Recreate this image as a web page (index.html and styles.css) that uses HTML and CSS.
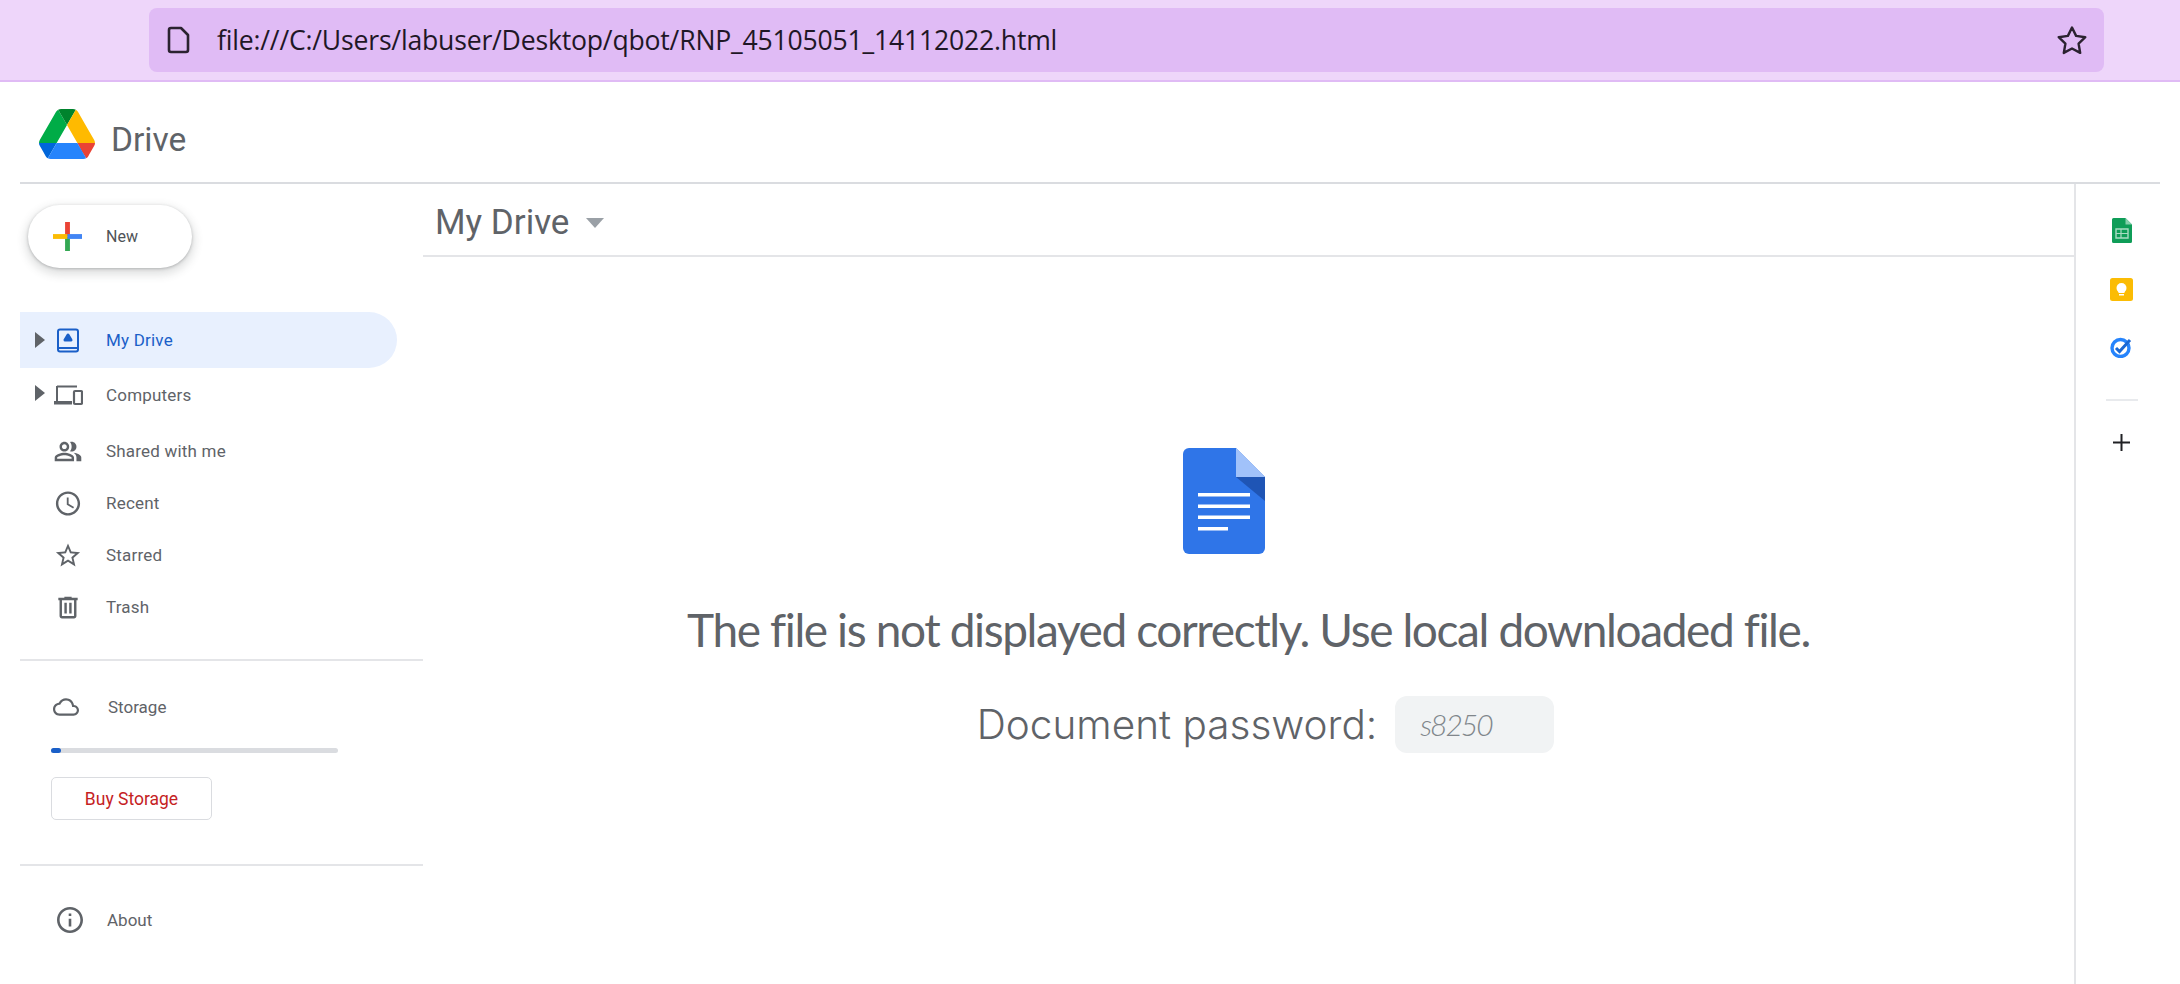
FILE: index.html
```html
<!DOCTYPE html>
<html lang="en">
<head>
    <meta charset="UTF-8">
    <title>Drive</title>
    <link rel="stylesheet" href="styles.css">
</head>
<body>
    <div class="browser-bar">
        <div class="address">
            <svg class="file-icon" viewBox="0 0 24 28"><path d="M4 2h10l7 7v15a2 2 0 0 1-2 2H4a2 2 0 0 1-2-2V4a2 2 0 0 1 2-2z" fill="none" stroke="#2b2230" stroke-width="2.6" stroke-linejoin="round"/></svg>
            <span class="url">file:///C:/Users/labuser/Desktop/qbot/RNP_45105051_14112022.html</span>
            <svg class="bookmark" viewBox="0 0 32 31"><path d="M16 2.5l4.1 8.4 9.2 1.3-6.7 6.5 1.6 9.2-8.2-4.4-8.2 4.4 1.6-9.2-6.7-6.5 9.2-1.3z" fill="none" stroke="#2b2230" stroke-width="2.4" stroke-linejoin="round"/></svg>
        </div>
    </div>

    <div class="app">
        <header class="app-header">
            <svg class="drive-logo" viewBox="0 0 87.3 78">
                <path d="m6.6 66.85 3.85 6.65c.8 1.4 1.95 2.5 3.3 3.3l13.75-23.8h-27.5c0 1.55.4 3.1 1.2 4.5z" fill="#0066da"/>
                <path d="m43.65 25-13.75-23.8c-1.35.8-2.5 1.9-3.3 3.3l-25.4 44a9.06 9.06 0 0 0 -1.2 4.5h27.5z" fill="#00ac47"/>
                <path d="m73.55 76.8c1.35-.8 2.5-1.9 3.3-3.3l1.6-2.75 7.65-13.25c.8-1.4 1.2-2.95 1.2-4.5h-27.502l5.852 11.5z" fill="#ea4335"/>
                <path d="m43.65 25 13.75-23.8c-1.35-.8-2.9-1.2-4.5-1.2h-18.5c-1.6 0-3.15.45-4.5 1.2z" fill="#00832d"/>
                <path d="m59.8 53h-32.3l-13.75 23.8c1.35.8 2.9 1.2 4.5 1.2h50.8c1.6 0 3.15-.45 4.5-1.2z" fill="#2684fc"/>
                <path d="m73.4 26.5-12.7-22c-.8-1.4-1.95-2.5-3.3-3.3l-13.75 23.8 16.15 28h27.45c0-1.55-.4-3.1-1.2-4.5z" fill="#ffba00"/>
            </svg>
            <span class="drive-name">Drive</span>
        </header>

        <div class="app-body">
            <aside class="sidebar">
                <button class="new-btn">
                    <svg class="new-plus" viewBox="0 0 30 30">
                        <rect x="12.5" y="0" width="5" height="15" fill="#ea4335"/>
                        <rect x="12.5" y="15" width="5" height="15" fill="#34a853"/>
                        <rect x="0" y="12.5" width="15" height="5" fill="#fbbc04"/>
                        <rect x="15" y="12.5" width="15" height="5" fill="#4285f4"/>
                    </svg>
                    <span>New</span>
                </button>

                <nav class="nav">
                    <div class="nav-item active">
                        <span class="arrow"></span>
                        <svg class="nav-icon" viewBox="0 0 30 29"><rect x="5" y="3.5" width="20" height="22" rx="2" fill="none" stroke="#1a5fc8" stroke-width="2"/><rect x="5" y="21" width="20" height="2" fill="#1a5fc8"/><path d="M15 9l3 5h-6z" fill="#1a5fc8" stroke="#1a5fc8" stroke-width="3" stroke-linejoin="round"/></svg>
                        <span>My Drive</span>
                    </div>
                    <div class="nav-item computers">
                        <span class="arrow"></span>
                        <svg class="nav-icon" viewBox="0 0 30 29"><path d="M4 5.500h20M4 5v15" fill="none" stroke="#5f6368" stroke-width="2"/><path d="M1 20h18v3.500H1z" fill="#5f6368"/><rect x="21" y="10" width="8" height="13" rx="1" fill="none" stroke="#5f6368" stroke-width="2.200"/></svg>
                        <span>Computers</span>
                    </div>
                    <div class="nav-item shared">
                        <span class="arrow-space"></span>
                        <svg class="nav-icon" viewBox="0 0 24 24"><path fill="#5f6368" d="M16.67 13.13C18.04 14.06 19 15.32 19 17v3h4v-3c0-2.18-3.57-3.47-6.33-3.87zM15 12c2.21 0 4-1.79 4-4s-1.79-4-4-4c-.47 0-.91.1-1.33.24C14.5 5.27 15 6.58 15 8s-.5 2.73-1.33 3.76c.42.14.86.24 1.33.24zM9 12c2.21 0 4-1.79 4-4s-1.79-4-4-4-4 1.79-4 4 1.79 4 4 4zm0-6c1.1 0 2 .9 2 2s-.9 2-2 2-2-.9-2-2 .9-2 2-2zM9 13c-2.67 0-8 1.34-8 4v3h16v-3c0-2.66-5.33-4-8-4zm6 5H3v-.99C3.2 16.29 6.3 15 9 15s5.8 1.29 6 2v1z"/></svg>
                        <span>Shared with me</span>
                    </div>
                    <div class="nav-item">
                        <span class="arrow-space"></span>
                        <svg class="nav-icon" viewBox="0 0 24 24"><path fill="#5f6368" d="M11.99 2C6.47 2 2 6.48 2 12s4.47 10 9.99 10C17.52 22 22 17.52 22 12S17.52 2 11.99 2zM12 20c-4.42 0-8-3.58-8-8s3.58-8 8-8 8 3.58 8 8-3.58 8-8 8zM12.5 7H11v6l5.25 3.15.75-1.23-4.5-2.67z"/></svg>
                        <span>Recent</span>
                    </div>
                    <div class="nav-item">
                        <span class="arrow-space"></span>
                        <svg class="nav-icon" viewBox="0 0 24 24"><path fill="#5f6368" d="M22 9.24l-7.19-.62L12 2 9.19 8.63 2 9.24l5.46 4.73L5.82 21 12 17.27 18.18 21l-1.63-7.03L22 9.24zM12 15.4l-3.76 2.27 1-4.28-3.32-2.88 4.38-.38L12 6.1l1.71 4.04 4.38.38-3.32 2.88 1 4.28L12 15.4z"/></svg>
                        <span>Starred</span>
                    </div>
                    <div class="nav-item">
                        <span class="arrow-space"></span>
                        <svg class="nav-icon" viewBox="0 0 24 24"><path fill="#5f6368" d="M15 4V3H9v1H4v2h1v13c0 1.1.9 2 2 2h10c1.1 0 2-.9 2-2V6h1V4h-5zm2 15H7V6h10v13zM9 8h2v9H9zm4 0h2v9h-2z"/></svg>
                        <span>Trash</span>
                    </div>
                </nav>

                <div class="storage">
                    <div class="storage-label">
                        <svg class="cloud" viewBox="0 0 24 24"><path fill="#5f6368" d="M12 4C9.11 4 6.6 5.64 5.35 8.04 2.34 8.36 0 10.91 0 14c0 3.31 2.69 6 6 6h13c2.76 0 5-2.24 5-5 0-2.64-2.05-4.78-4.65-4.96C18.67 6.59 15.64 4 12 4zm7 14H6c-2.21 0-4-1.79-4-4 0-2.05 1.53-3.76 3.56-3.97l1.07-.11.5-.95C8.08 7.14 9.94 6 12 6c2.62 0 4.88 1.86 5.39 4.43l.3 1.5 1.53.11c1.56.1 2.78 1.41 2.78 2.96 0 1.65-1.35 3-3 3z"/></svg>
                        <span>Storage</span>
                    </div>
                    <div class="storage-track"><div class="storage-fill" style="width: 10px"></div></div>
                    <button class="buy-btn">Buy Storage</button>
                </div>

                <div class="about">
                    <svg class="info" viewBox="2 2 20 20"><path fill="#5f6368" d="M11 7h2v2h-2zm0 4h2v6h-2zm1-9C6.48 2 2 6.48 2 12s4.48 10 10 10 10-4.48 10-10S17.52 2 12 2zm0 18c-4.41 0-8-3.59-8-8s3.59-8 8-8 8 3.59 8 8-3.59 8-8 8z"/></svg>
                    <span>About</span>
                </div>
            </aside>

            <main class="main">
                <div class="main-title">
                    <span>My Drive</span>
                    <span class="caret"></span>
                </div>
                <div class="message">
                    <svg class="doc-icon" viewBox="0 0 82 106">
                        <path d="M6 0h47l29 29v71a6 6 0 0 1-6 6H6a6 6 0 0 1-6-6V6a6 6 0 0 1 6-6z" fill="#2f75e8"/>
                        <path d="M53 29h29v24z" fill="#1f55b5"/>
                        <path d="M53 0l29 29H53z" fill="#a1c2fa"/>
                        <rect x="15" y="45" width="52" height="3.5" fill="#fff"/>
                        <rect x="15" y="56.5" width="52" height="3.5" fill="#fff"/>
                        <rect x="15" y="67.5" width="52" height="3.5" fill="#fff"/>
                        <rect x="15" y="79" width="30" height="3.5" fill="#fff"/>
                    </svg>
                    <h1 class="notice">The file is not displayed correctly. Use local downloaded file.</h1>
                    <div class="password">
                        <span>Document password:</span>
                        <span class="password-value">s8250</span>
                    </div>
                </div>
            </main>

            <aside class="rail">
                <svg class="rail-sheets" viewBox="0 0 20 25">
                    <path d="M1.500 0h12L20 6.500V23.500a1.500 1.500 0 0 1-1.500 1.500h-17A1.500 1.500 0 0 1 0 23.500v-22A1.500 1.500 0 0 1 1.500 0z" fill="#0f9d58"/>
                    <path d="M13.500 0L20 6.500h-6.500z" fill="#87ceac"/>
                    <path d="M4 11h12v9H4z" fill="none" stroke="#a8dbc2" stroke-width="1.400"/>
                    <path d="M4 15.500h12M9 11v9" stroke="#a8dbc2" stroke-width="1.200"/>
                </svg>
                <svg class="rail-keep" viewBox="0 0 23 23">
                    <rect width="23" height="23" rx="2.500" fill="#fbbc04"/>
                    <circle cx="11.500" cy="10" r="5" fill="#fff"/>
                    <rect x="8.500" y="13" width="6" height="2" fill="#fff"/>
                    <rect x="9" y="16" width="5" height="1.500" fill="#fff"/>
                </svg>
                <svg class="rail-tasks" viewBox="0 0 23 21">
                    <circle cx="10.500" cy="11" r="8.500" fill="none" stroke="#2684fc" stroke-width="3.400"/>
                    <path d="M6 11l3.500 3.500L20 3" fill="none" stroke="#1a67d2" stroke-width="3"/>
                </svg>
                <div class="rail-divider"></div>
                <svg class="rail-plus" viewBox="0 0 17 17"><path d="M8.500 0v17M0 8.500h17" stroke="#202124" stroke-width="2"/></svg>
            </aside>
        </div>
    </div>
</body>
</html>
```
FILE: styles.css
```css
* {
    box-sizing: border-box;
}
body {
    margin: 0;
    height: 100vh;
    overflow: hidden;
    background: white;
    font-family: Roboto, sans-serif;
    color: #5f6368;
    display: flex;
    flex-direction: column;
}
.browser-bar {
    height: 82px;
    padding: 8px 76px 0 149px;
    background: #eed6fa;
    border-bottom: 2px solid #e0bbf5;
}
.address {
    height: 64px;
    padding: 0 16px 0 18px;
    background: #e0bbf5;
    border-radius: 8px;
    display: flex;
    align-items: center;
}
.file-icon {
    width: 24px;
    height: 28px;
    margin-right: 26px;
}
.url {
    flex: 1;
    font-family: "Open Sans", sans-serif;
    font-size: 26.6px;
    letter-spacing: -0.2px;
    color: #1f1726;
}
.bookmark {
    width: 32px;
    height: 31px;
}
.app {
    flex: 1;
    margin: 0 20px;
    display: flex;
    flex-direction: column;
    min-height: 0;
}
.app-header {
    height: 102px;
    padding: 0 0 0 19px;
    border-bottom: 2px solid #dadce0;
    display: flex;
    align-items: center;
}
.drive-logo {
    width: 56px;
    height: 52px;
    margin: 4px 16px 0 0;
}
.drive-name {
    font-size: 33.5px;
    margin-top: 15px;
}
.app-body {
    flex: 1;
    display: flex;
    min-height: 0;
}
.sidebar {
    width: 403px;
    flex: none;
    padding-top: 21px;
}
.new-btn {
    width: 164px;
    height: 63px;
    margin-left: 8px;
    padding: 0 0 0 25px;
    background: white;
    border: none;
    border-radius: 32px;
    box-shadow: 0 1px 3px rgba(60, 64, 67, 0.3), 0 4px 8px 3px rgba(60, 64, 67, 0.15);
    display: flex;
    align-items: center;
    gap: 24px;
    font-family: Roboto, sans-serif;
    font-size: 16px;
    color: #4f5357;
}
.new-plus {
    width: 29px;
    height: 29px;
}
.nav {
    margin-top: 44px;
    font-size: 17px;
    letter-spacing: 0.2px;
}
.nav-item {
    width: 377px;
    height: 52px;
    padding-left: 15px;
    display: grid;
    grid-template-columns: 18px 30px 1fr;
    align-items: center;
}
.nav-item > span:last-child {
    margin-left: 23px;
}
.nav-item.active {
    height: 56px;
    background: #e8f0fe;
    border-radius: 0 28px 28px 0;
    color: #1a5fc8;
}
.nav-item.computers {
    margin-top: 1px;
}
.nav-item.shared {
    margin-top: 4px;
}
.arrow {
    width: 0;
    height: 0;
    border-left: 10px solid #5f6368;
    border-top: 8.5px solid transparent;
    border-bottom: 8.5px solid transparent;
}
.computers .arrow {
    margin-top: -4px;
}
.nav-icon {
    width: 30px;
    height: 29px;
}
.storage {
    margin-top: 26px;
    height: 207px;
    padding: 33px 0 0 31px;
    border-top: 2px solid #e4e5e8;
    border-bottom: 2px solid #e4e5e8;
    font-size: 17px;
}
.storage-label {
    display: flex;
    align-items: center;
    gap: 27px;
}
.cloud {
    width: 30px;
    height: 26px;
}
.storage-track {
    width: 287px;
    height: 5px;
    margin-top: 28px;
    background: #dadce0;
    border-radius: 3px;
}
.storage-fill {
    height: 5px;
    background: #1a5fc8;
    border-radius: 3px;
}
.buy-btn {
    width: 161px;
    height: 43px;
    margin-top: 24px;
    background: white;
    border: 1.500px solid #dadce0;
    border-radius: 5px;
    color: #c5221f;
    font-family: Roboto, sans-serif;
    font-size: 17.5px;
}
.about {
    padding: 41px 0 0 37px;
    display: flex;
    align-items: center;
    gap: 24px;
    font-size: 17px;
}
.info {
    width: 26px;
    height: 26px;
}
.main {
    flex: 1;
    display: flex;
    flex-direction: column;
}
.main-title {
    height: 73px;
    flex: none;
    padding: 6px 0 0 12px;
    border-bottom: 2px solid #e4e5e8;
    display: flex;
    align-items: center;
    gap: 17px;
    font-size: 35px;
}
.caret {
    width: 0;
    height: 0;
    border-top: 10px solid #9aa0a6;
    border-left: 9.500px solid transparent;
    border-right: 9.500px solid transparent;
}
.message {
    display: flex;
    flex-direction: column;
    align-items: center;
    padding-top: 191px;
}
.doc-icon {
    width: 82px;
    height: 106px;
    margin-right: 50px;
}
.notice {
    margin: 48px 0 0;
    font-family: Lato, sans-serif;
    font-weight: 400;
    font-size: 46px;
    letter-spacing: -1.4px;
    line-height: 56px;
    white-space: nowrap;
}
.password {
    margin: 38px 0 0 34px;
    display: flex;
    align-items: center;
    gap: 18px;
    font-family: Inter, sans-serif;
    font-weight: 300;
    font-size: 40.5px;
}
.password-value {
    width: 159px;
    height: 57px;
    padding-left: 25px;
    background: #f1f3f4;
    border-radius: 12px;
    font-family: Lato, sans-serif;
    font-style: italic;
    font-weight: 300;
    font-size: 30px;
    letter-spacing: -2px;
    line-height: 57px;
    color: #80868b;
}
.rail {
    width: 86px;
    flex: none;
    padding: 34px 0 0 7px;
    border-left: 2px solid #e4e5e8;
    display: flex;
    flex-direction: column;
    align-items: center;
}
.rail-sheets {
    width: 20px;
    height: 25px;
}
.rail-keep {
    width: 23px;
    height: 23px;
    margin-top: 35px;
}
.rail-tasks {
    width: 23px;
    height: 21px;
    margin-top: 36px;
}
.rail-divider {
    width: 32px;
    height: 2px;
    margin-top: 41px;
    background: #e8eaed;
}
.rail-plus {
    width: 17px;
    height: 17px;
    margin-top: 33px;
}
```
